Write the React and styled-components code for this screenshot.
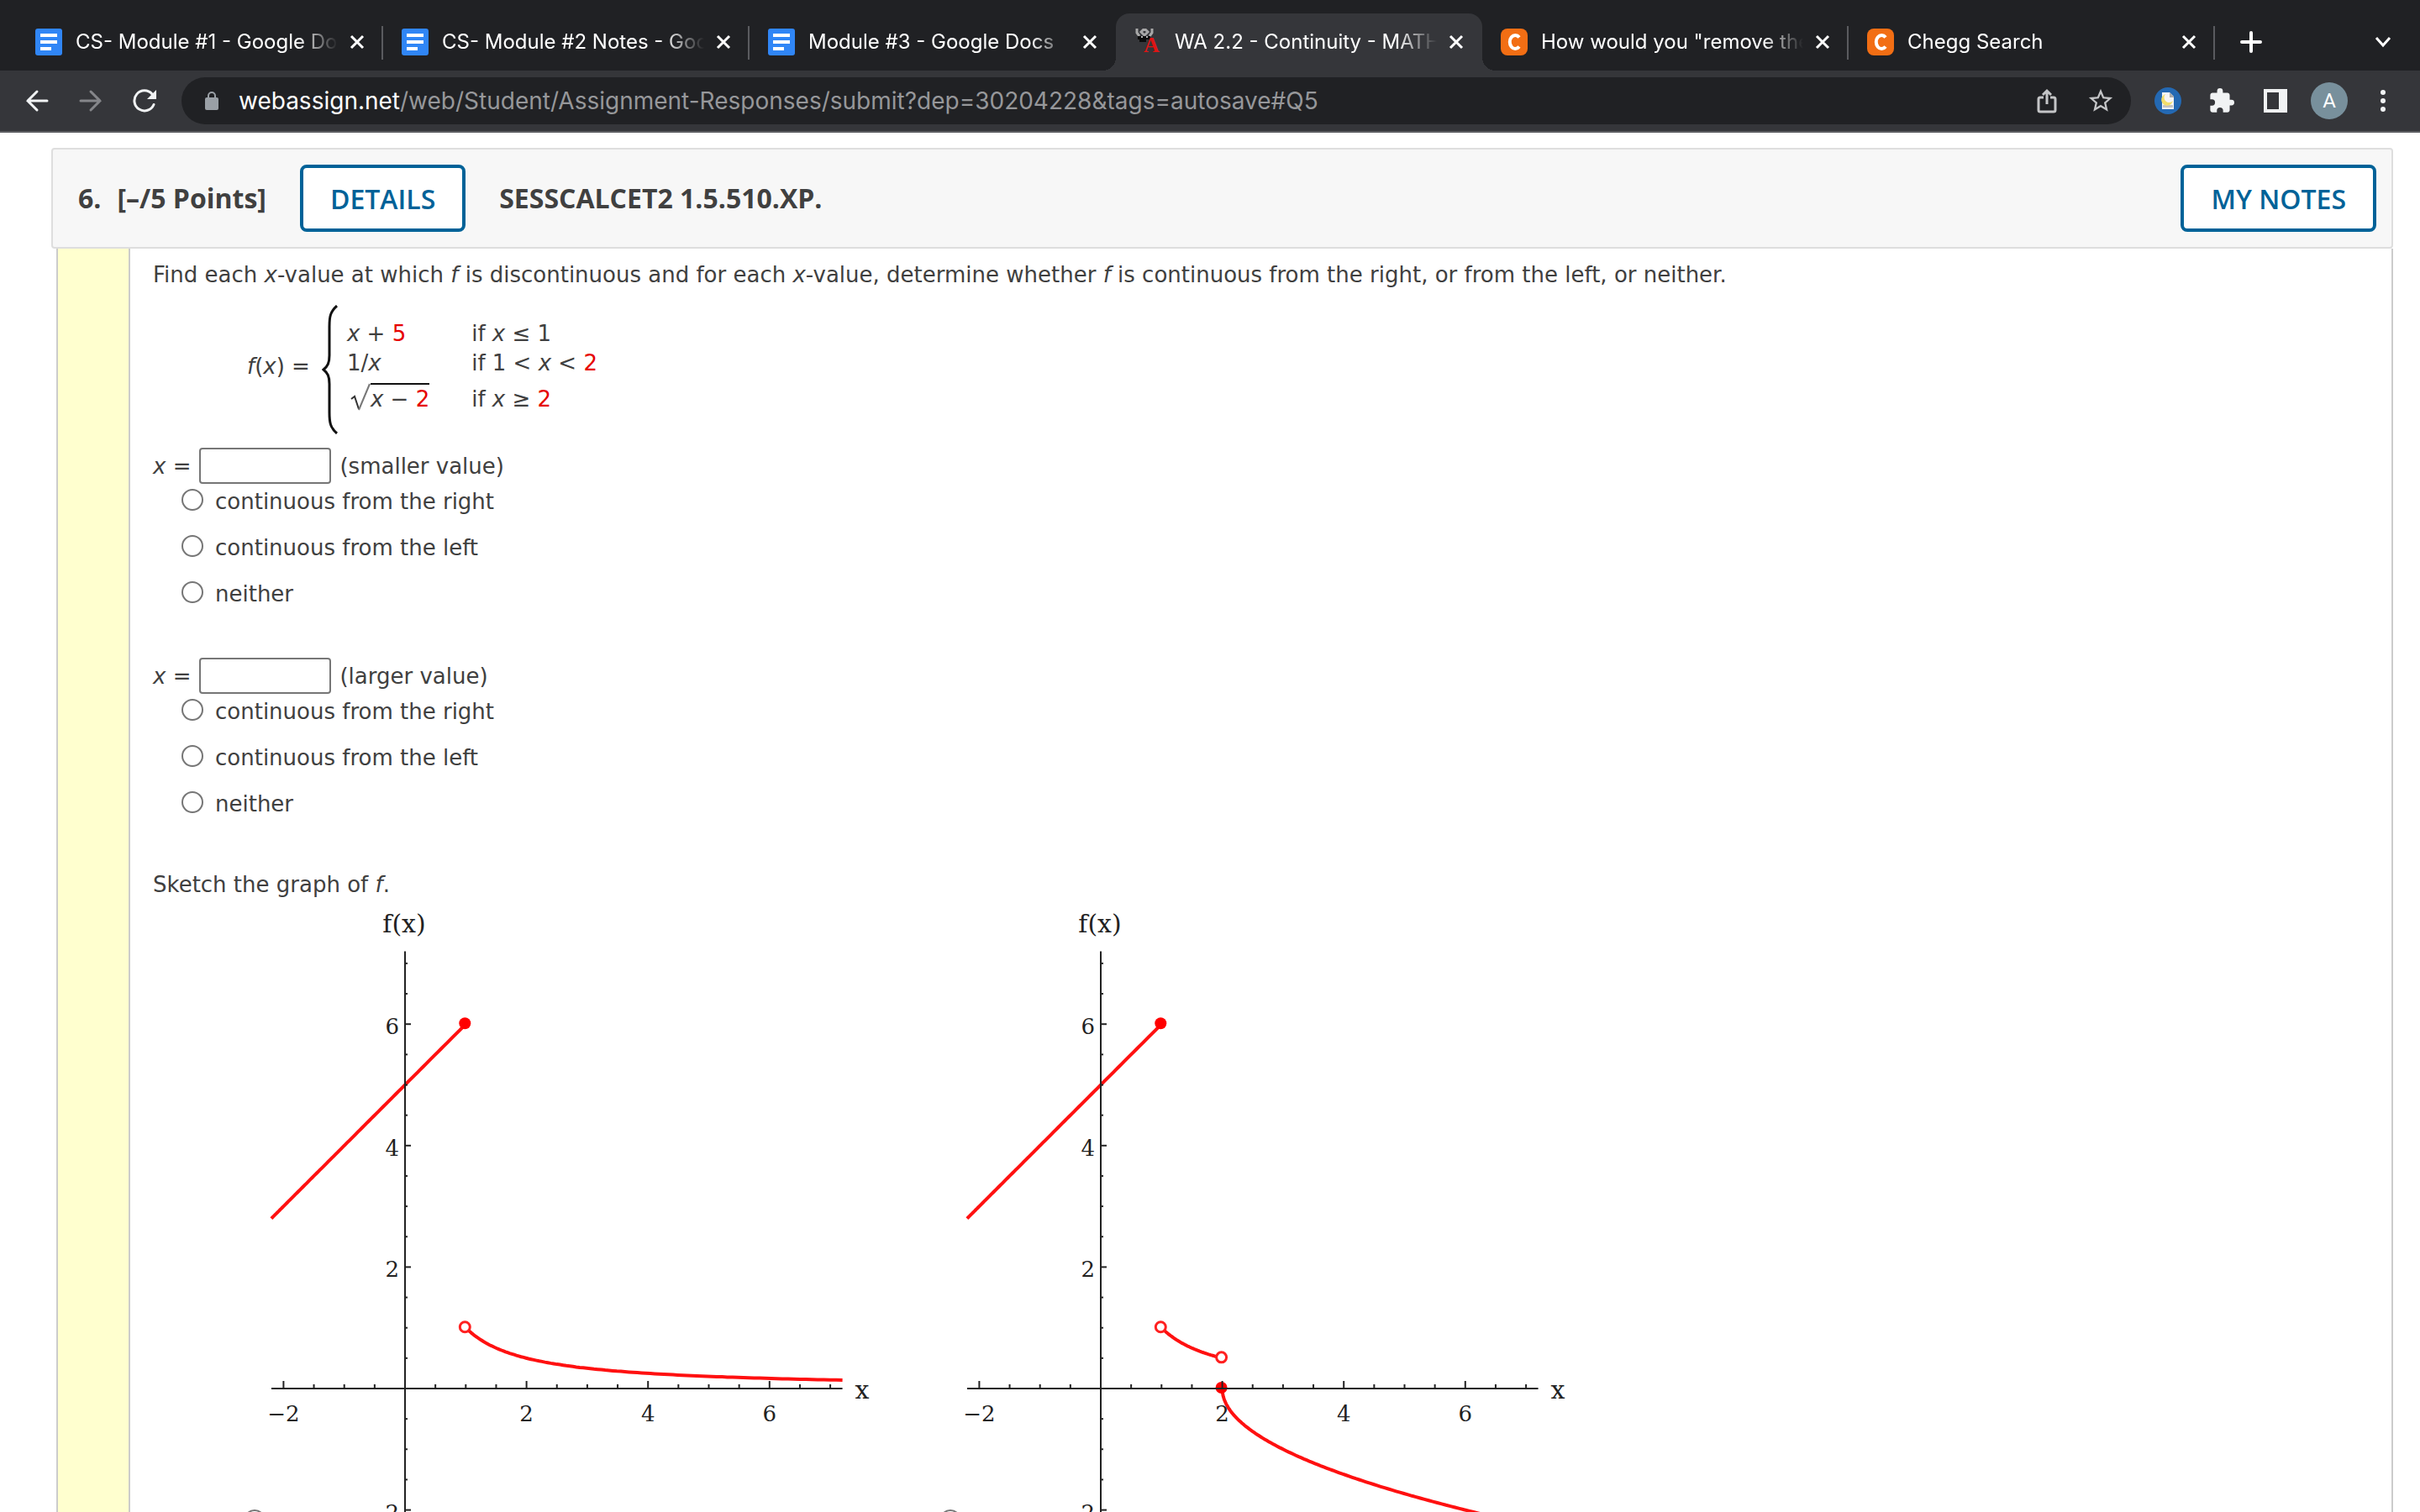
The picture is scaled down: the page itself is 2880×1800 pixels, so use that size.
import { useId } from "react";
import styled, { createGlobalStyle } from "styled-components";

const TABS = [
  { title: "CS- Module #1 - Google Docs", icon: "docs" },
  { title: "CS- Module #2 Notes - Goog", icon: "docs" },
  { title: "Module #3 - Google Docs", icon: "docs" },
  { title: "WA 2.2 - Continuity - MATH", icon: "webassign", active: true },
  { title: 'How would you "remove the', icon: "chegg" },
  { title: "Chegg Search", icon: "chegg" },
];

const CHOICES = [
  "continuous from the right",
  "continuous from the left",
  "neither",
];

const Favicon = ({ name }) => {
  if (name === "docs")
    return (
      <svg width="32" height="32" viewBox="0 0 32 32" aria-hidden="true">
        <rect width="32" height="32" rx="3" fill="#3086f6" />
        <path d="M6 6h20v4H6zM6 14h20v4H6zM6 22h13v4H6z" fill="#fff" />
      </svg>
    );

  if (name === "chegg")
    return (
      <svg width="32" height="32" viewBox="0 0 32 32" aria-hidden="true">
        <rect width="32" height="32" rx="8" fill="#f26e14" />
        <path
          d="M22 10.500A6.500 8 0 1 0 22 21.500"
          fill="none"
          stroke="#fff"
          strokeWidth="4"
        />
      </svg>
    );

  return (
    <svg width="32" height="32" viewBox="0 0 32 32" aria-hidden="true">
      <path
        d="M3 0v5l3 4M21 0v5l-3 4M8 4l4-4 4 4-4 4z"
        fill="none"
        stroke="#a8a8a8"
        strokeWidth="3"
      />
      <path d="M4 9h15v4h-5v3H6v-3H4z" fill="#0c0c0c" />
      <path d="M8 9h2v2H8zM14 9h2v2h-2z" fill="#b0b0b0" />
      <FaviconLetter x="11" y="28">
        A
      </FaviconLetter>
    </svg>
  );
};

const App = () => (
  <Browser>
    <GlobalStyle />
    <TabStrip>
      {TABS.map((tab, i) => (
        <Tab
          key={tab.title}
          $active={tab.active}
          $divider={!tab.active && !TABS[i + 1]?.active}
        >
          <Favicon name={tab.icon} />
          <TabTitle>{tab.title}</TabTitle>
          <IconButton aria-label="Close tab">
            <svg width="18" height="18" viewBox="0 0 18 18">
              <path d="M2 2l14 14M16 2L2 16" stroke="#fff" strokeWidth="3" />
            </svg>
          </IconButton>
        </Tab>
      ))}
      <NewTab aria-label="New tab">
        <svg width="26" height="26" viewBox="0 0 26 26">
          <path
            d="M13 2v22M2 13h22"
            stroke="#fff"
            strokeWidth="4"
            strokeLinecap="round"
          />
        </svg>
      </NewTab>
      <IconButton aria-label="Search tabs">
        <svg width="20" height="14" viewBox="0 0 20 14">
          <path d="M2 2l8 9 8-9" fill="none" stroke="#fff" strokeWidth="3" />
        </svg>
      </IconButton>
    </TabStrip>

    <Toolbar>
      <ToolbarButton aria-label="Back">
        <svg width="28" height="28" viewBox="0 0 28 28">
          <path
            d="M26 14H3M14 3L3 14l11 11"
            fill="none"
            stroke="#f1f3f4"
            strokeWidth="3"
            strokeLinecap="round"
          />
        </svg>
      </ToolbarButton>
      <ToolbarButton aria-label="Forward">
        <svg width="28" height="28" viewBox="0 0 28 28">
          <path
            d="M2 14h23M14 3l11 11-11 11"
            fill="none"
            stroke="#85868a"
            strokeWidth="3"
            strokeLinecap="round"
          />
        </svg>
      </ToolbarButton>
      <ToolbarButton aria-label="Reload">
        <svg width="28" height="28" viewBox="0 0 28 28">
          <path
            d="M25 18.500A12 12 0 1 1 23 6"
            fill="none"
            stroke="#f1f3f4"
            strokeWidth="3"
            strokeLinecap="round"
          />
          <path d="M28 1v11H17z" fill="#f1f3f4" />
        </svg>
      </ToolbarButton>
      <AddressBar>
        <svg width="16" height="22" viewBox="0 0 16 22" aria-hidden="true">
          <rect y="7" width="16" height="15" rx="2" fill="#9aa0a6" />
          <path
            d="M4 8V5a4 4 0 0 1 8 0v3"
            fill="none"
            stroke="#9aa0a6"
            strokeWidth="2"
          />
        </svg>
        <Url>
          <strong>webassign.net</strong>
          /web/Student/Assignment-Responses/submit?dep=30204228&tags=autosave#Q5
        </Url>
        <ToolbarButton aria-label="Share">
          <svg width="24" height="30" viewBox="0 0 24 30">
            <path
              d="M8 11H4a2 2 0 0 0-2 2v13a2 2 0 0 0 2 2h16a2 2 0 0 0 2-2V13a2 2 0 0 0-2-2h-4M12 19V3M7 8l5-5 5 5"
              fill="none"
              stroke="#c4c5c7"
              strokeWidth="3"
            />
          </svg>
        </ToolbarButton>
        <ToolbarButton aria-label="Bookmark">
          <svg width="34" height="34" viewBox="0 0 24 24">
            <path
              d="M22 9.240l-7.190-.62L12 2 9.190 8.630 2 9.240l5.460 4.730L5.820 21 12 17.270 18.180 21l-1.630-7.030L22 9.240zM12 15.400l-3.760 2.270 1-4.280-3.320-2.880 4.380-.38L12 6.100l1.710 4.040 4.380.38-3.320 2.880 1 4.280L12 15.400z"
              fill="#c4c5c7"
            />
          </svg>
        </ToolbarButton>
      </AddressBar>
      <ToolbarButton aria-label="Night reader">
        <svg width="32" height="32" viewBox="0 0 32 32">
          <circle cx="16" cy="16" r="16" fill="#2469b3" />
          <path d="M9 6h9l5 5v15H9z" fill="#f5f5f5" />
          <path d="M18 6l5 5v1h-5z" fill="#a9a9a9" />
          <path d="M10 21h12v3H10z" fill="#c4c4c4" />
          <path d="M13 8a7 7 0 1 0 9 8 6 6 0 0 1-9-8z" fill="#f2de6b" />
        </svg>
      </ToolbarButton>
      <ToolbarButton aria-label="Extensions">
        <svg width="30" height="30" viewBox="1 1 22 22">
          <path
            d="M20.500 11H19V7c0-1.100-.9-2-2-2h-4V3.500a2.500 2.500 0 0 0-5 0V5H4c-1.100 0-2 .9-2 2v3.800h1.500a2.700 2.700 0 0 1 0 5.400H2V20c0 1.100.9 2 2 2h3.800v-1.500a2.700 2.700 0 0 1 5.400 0V22H17c1.100 0 2-.9 2-2v-4h1.500a2.500 2.500 0 0 0 0-5z"
            fill="#f1f3f4"
          />
        </svg>
      </ToolbarButton>
      <ToolbarButton aria-label="Side panel">
        <svg width="28" height="28" viewBox="0 0 28 28">
          <path
            d="M0 0h28v28H0zM4 4v20h14V4z"
            fill="#f1f3f4"
            fillRule="evenodd"
          />
        </svg>
      </ToolbarButton>
      <Avatar>A</Avatar>
      <ToolbarButton aria-label="Menu">
        <svg width="6" height="28" viewBox="0 0 6 28">
          <circle cx="3" cy="4" r="3" fill="#f1f3f4" />
          <circle cx="3" cy="14" r="3" fill="#f1f3f4" />
          <circle cx="3" cy="24" r="3" fill="#f1f3f4" />
        </svg>
      </ToolbarButton>
    </Toolbar>

    <Page>
      <QuestionHeader>
        <QuestionNumber>6.</QuestionNumber>
        <Points>[–/5 Points]</Points>
        <OutlineButton>DETAILS</OutlineButton>
        <QuestionCode>SESSCALCET2 1.5.510.XP.</QuestionCode>
        <OutlineButton>MY NOTES</OutlineButton>
      </QuestionHeader>
      <QuestionBody>
        <Prompt>
          Find each <i>x</i>-value at which <i>f</i> is discontinuous and for
          each <i>x</i>-value, determine whether <i>f</i> is continuous from the
          right, or from the left, or neither.
        </Prompt>
        <Piecewise />
        <ValueQuestion hint="(smaller value)" />
        <ValueQuestion hint="(larger value)" />
        <Prompt>
          Sketch the graph of <i>f</i>.
        </Prompt>
        <Graphs>
          <GraphChoice>
            <Radio name="graph" aria-label="Graph 1" />
            <Graph
              segments={[
                { from: -2.2, to: 1, fn: (x) => x + 5 },
                { from: 1, to: 7.2, fn: (x) => 1 / x },
              ]}
              closed={[[1, 6]]}
              open={[[1, 1]]}
            />
          </GraphChoice>
          <GraphChoice>
            <Radio name="graph" aria-label="Graph 2" />
            <Graph
              segments={[
                { from: -2.2, to: 1, fn: (x) => x + 5 },
                { from: 1, to: 2, fn: (x) => 1 / x },
                { from: 2, to: 7.2, fn: (x) => -Math.sqrt(x - 2) },
              ]}
              closed={[
                [1, 6],
                [2, 0],
              ]}
              open={[
                [1, 1],
                [2, 0.5],
              ]}
            />
          </GraphChoice>
        </Graphs>
      </QuestionBody>
    </Page>
  </Browser>
);

const Piecewise = () => (
  <Formula>
    <span>
      <i>f</i>(<i>x</i>) =
    </span>
    <Brace width="20" height="154" viewBox="0 0 20 154" aria-hidden="true">
      <path
        d="M18 1C10 8 9 14 9 26v34c0 9-2 13-7 17 5 4 7 8 7 17v34c0 12 1 18 9 25"
        fill="none"
        stroke="#111"
        strokeWidth="3"
      />
    </Brace>
    <Cases>
      <span>
        <i>x</i> + <Given>5</Given>
      </span>
      <span>
        if <i>x</i> ≤ 1
      </span>
      <span>
        1/<i>x</i>
      </span>
      <span>
        if 1 &lt; <i>x</i> &lt; <Given>2</Given>
      </span>
      <Root>
        <svg width="24" height="34" viewBox="0 0 24 34" aria-hidden="true">
          <path d="M1 19l4-3 5 15" fill="none" stroke="#333" strokeWidth="2" />
          <path d="M10 32L23 1" stroke="#777" strokeWidth="2" />
        </svg>
        <Radicand>
          <i>x</i> − <Given>2</Given>
        </Radicand>
      </Root>
      <span>
        if <i>x</i> ≥ <Given>2</Given>
      </span>
    </Cases>
  </Formula>
);

const ValueQuestion = ({ hint }) => {
  const id = useId();

  return (
    <ValueBlock>
      <ValueRow>
        <label htmlFor={id}>
          <i>x</i> =
        </label>
        <ValueInput id={id} type="text" />
        <span>{hint}</span>
      </ValueRow>
      {CHOICES.map((choice) => (
        <Choice key={choice}>
          <Radio name={id} />
          {choice}
        </Choice>
      ))}
    </ValueBlock>
  );
};

// pixels per unit and the origin inside the drawing
const UNIT = 72.3;
const ORIGIN = { x: 166, y: 572 };
const px = (x) => ORIGIN.x + x * UNIT;
const py = (y) => ORIGIN.y - y * UNIT;

const range = (from, to, step) => {
  const values = [];
  for (let v = from; v <= to; v += step) values.push(v);
  return values;
};

const toPoints = ({ from, to, fn }) =>
  range(0, 120, 1)
    .map((i) => {
      // squared spacing, more samples near the start of a curve
      const x = from + (to - from) * (i / 120) ** 2;
      return `${px(x).toFixed(1)},${py(fn(x)).toFixed(1)}`;
    })
    .join(" ");

const Graph = ({ segments, closed, open }) => (
  <svg width="730" height="742" viewBox="0 0 730 742" role="img">
    <g fill="none" stroke="#ff1010" strokeWidth="4">
      {segments.map((segment) => (
        <polyline key={segment.from} points={toPoints(segment)} />
      ))}
    </g>
    {closed.map(([x, y]) => (
      <circle key={x} cx={px(x) - 1} cy={py(y) - 1} r="7" fill="#ff0000" />
    ))}
    <g stroke="#222" strokeWidth="2">
      <path
        d={`M${px(-2.2)} ${py(0)}H${px(7.2)}M${px(0)} ${py(7.2)}V${py(-2.2)}`}
      />
      {range(-2, 7, 0.5).map((x) => (
        <path key={x} d={`M${px(x)} ${py(0)}v${x % 2 ? -5 : -9}`} />
      ))}
      {range(-2, 7, 0.5).map((y) => (
        <path key={y} d={`M${px(0)} ${py(y)}h${y % 2 ? 3 : 7}`} />
      ))}
    </g>
    {open.map(([x, y]) => (
      <circle
        key={x}
        cx={px(x) - 1}
        cy={py(y) - 1}
        r="6"
        fill="#fff"
        stroke="#ff2020"
        strokeWidth="3"
      />
    ))}
    <AxisText $name x={px(0) - 1} y="29" textAnchor="middle">
      f(x)
    </AxisText>
    <AxisText $name x={px(7.2) + 15} y={py(0) + 12}>
      x
    </AxisText>
    {[-2, 2, 4, 6].map((n) => (
      <AxisText key={n} x={px(n)} y={py(0) + 39} textAnchor="middle">
        {String(n).replace("-", "−")}
      </AxisText>
    ))}
    {[-2, 2, 4, 6].map((n) => (
      <AxisText key={n} x={px(0) - 7} y={py(n) + 12} textAnchor="end">
        {String(n).replace("-", "−")}
      </AxisText>
    ))}
  </svg>
);

const GlobalStyle = createGlobalStyle`
  * {
    box-sizing: border-box;
  }

  body {
    margin: 0;
    background-color: #fff;
  }

  svg {
    display: block;
    flex-shrink: 0;
  }
`;

const Browser = styled.div`
  height: 100vh;
  overflow: hidden;
  display: flex;
  flex-direction: column;
  font-family: Inter, "Liberation Sans", sans-serif;
`;

const TabStrip = styled.div`
  flex-shrink: 0;
  display: flex;
  height: 84px;
  padding: 16px 34px 0 20px;
  background-color: #202124;
`;

const Tab = styled.div`
  position: relative;
  flex: 0 1 436px;
  min-width: 0;
  display: flex;
  align-items: center;
  padding: 0 22px;
  border-radius: 16px 16px 0 0;
  background-color: ${({ $active }) => ($active ? "#35363a" : "transparent")};

  &::after {
    content: "";
    display: ${({ $divider }) => ($divider ? "block" : "none")};
    position: absolute;
    right: 0;
    top: 15px;
    width: 2px;
    height: 40px;
    background-color: #5a5b5f;
  }

  /* the curved feet of the active tab */
  &::before {
    content: "";
    display: ${({ $active }) => ($active ? "block" : "none")};
    position: absolute;
    bottom: 0;
    left: -16px;
    right: -16px;
    height: 16px;
    background: radial-gradient(circle at 0 0, transparent 16px, #35363a 16px)
        left / 16px 16px no-repeat,
      radial-gradient(circle at 100% 0, transparent 16px, #35363a 16px) right /
        16px 16px no-repeat;
  }
`;

const TabTitle = styled.span`
  flex: 1;
  min-width: 0;
  margin: 0 14px 0 16px;
  overflow: hidden;
  white-space: nowrap;
  font-size: 24px;
  line-height: 32px;
  color: #fff;
  mask-image: linear-gradient(to right, #000 calc(100% - 48px), transparent);
`;

const FaviconLetter = styled.text`
  font-family: "Liberation Serif", serif;
  font-size: 26px;
  font-weight: 700;
  fill: #e01414;
`;

const IconButton = styled.button`
  display: flex;
  flex-shrink: 0;
  align-items: center;
  justify-content: center;
  padding: 0;
  border: none;
  background: none;
  cursor: pointer;
`;

const NewTab = styled(IconButton)`
  margin: 0 auto 0 30px;
`;

const ToolbarButton = styled(IconButton)`
  width: 44px;
  height: 44px;
`;

const Toolbar = styled.div`
  flex-shrink: 0;
  display: flex;
  align-items: center;
  gap: 20px;
  height: 74px;
  padding: 0 22px;
  background-color: #35363a;
  border-bottom: 2px solid #5c5d61;
`;

const AddressBar = styled.div`
  flex: 1;
  display: flex;
  align-items: center;
  gap: 20px;
  height: 56px;
  margin: 0 2px;
  padding: 0 14px 0 28px;
  border-radius: 28px;
  background-color: #202124;
`;

const Url = styled.span`
  flex: 1;
  padding-left: 4px;
  font-size: 28px;
  line-height: 36px;
  color: #96979a;

  strong {
    font-weight: 400;
    color: #fff;
  }
`;

const Avatar = styled(ToolbarButton)`
  border-radius: 50%;
  background-color: #78909c;
  color: #fff;
  font-family: Roboto, sans-serif;
  font-size: 24px;
`;

const Page = styled.main`
  flex: 1;
  min-height: 0;
  overflow: hidden;
  padding: 18px 32px 0 61px;
  font-family: Verdana, "DejaVu Sans", sans-serif;
  font-size: 26px;
  line-height: 36px;
  color: #404040;
`;

const QuestionHeader = styled.header`
  display: flex;
  align-items: center;
  height: 120px;
  padding: 0 18px 0 30px;
  border: 2px solid #dedede;
  border-radius: 4px;
  background-color: #f7f7f7;
  font-family: "Open Sans", "Noto Sans", sans-serif;
  font-size: 32px;
  font-weight: 700;
`;

const QuestionNumber = styled.span`
  margin-right: 19px;
`;

const Points = styled.span`
  margin-right: 40px;
`;

const QuestionCode = styled.span`
  margin: 0 auto 0 40px;
`;

const OutlineButton = styled.button`
  height: 80px;
  padding: 0 32px;
  border: 4px solid #006298;
  border-radius: 8px;
  background-color: #fff;
  color: #006298;
  font-family: inherit;
  font-size: 32px;
  font-weight: 600;
  cursor: pointer;
`;

const QuestionBody = styled.section`
  height: 100%;
  margin-left: 6px;
  padding: 11px 0 0 113px;
  border-right: 2px solid #ccc;
  border-left: 2px solid #ccc;
  background: linear-gradient(
    to right,
    #ffffcf 84px,
    #ccc 84px,
    #ccc 86px,
    #fff 86px
  );
`;

const Prompt = styled.p`
  margin: 2px 0 10px;
`;

const Formula = styled.div`
  display: flex;
  align-items: center;
  gap: 10px;
  margin: 10px 0 16px 112px;
`;

const Brace = styled.svg`
  margin: 8px 0 0 4px;
`;

const Cases = styled.div`
  display: grid;
  grid-template-columns: auto auto;
  column-gap: 50px;
  align-items: end;
  line-height: 35px;
`;

const Given = styled.span`
  color: #e60000;
`;

const Root = styled.span`
  display: flex;
  margin-left: 4px;
  padding-top: 6px;
`;

const Radicand = styled.span`
  border-top: 2px solid #111;
`;

const ValueBlock = styled.div`
  height: 250px;
`;

const ValueRow = styled.div`
  display: flex;
  align-items: center;
  gap: 10px;
  margin-bottom: 3px;
`;

const ValueInput = styled.input`
  width: 157px;
  height: 43px;
  border: 2px solid #767676;
  border-radius: 4px;
  background-color: #fff;
  font: inherit;
`;

const Radio = styled.input.attrs({ type: "radio" })`
  appearance: none;
  flex-shrink: 0;
  width: 26px;
  height: 26px;
  margin: 0;
  border: 2px solid #767676;
  border-radius: 50%;
  background-color: #fff;
`;

const Choice = styled.label`
  display: flex;
  align-items: center;
  gap: 14px;
  height: 36px;
  margin: 0 0 19px 34px;

  ${Radio} {
    margin-bottom: 4px;
  }
`;

const Graphs = styled.div`
  display: flex;
  gap: 72px;
  padding-left: 108px;
`;

const GraphChoice = styled.div`
  display: flex;
  align-items: flex-end;
`;

const AxisText = styled.text`
  font-family: "DejaVu Serif", serif;
  font-size: ${({ $name }) => ($name ? "30px" : "26px")};
  fill: #222;
`;

export default App;
